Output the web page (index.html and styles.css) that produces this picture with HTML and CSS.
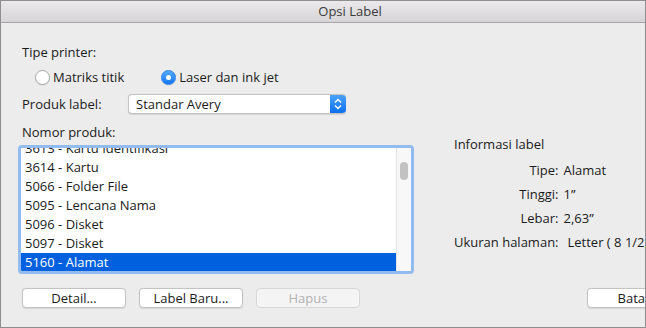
FILE: index.html
```html
<!DOCTYPE html>
<html lang="id">
<head>
<meta charset="utf-8">
<title>Opsi Label</title>
<link rel="stylesheet" href="styles.css">
</head>
<body>
<div class="window">
  <div class="titlebar"><span class="title">Opsi Label</span></div>
  <div class="content">
    <div class="label">Tipe printer:</div>
    <div class="radios">
      <label class="radio"><span class="circle"></span>Matriks titik</label>
      <label class="radio"><span class="circle checked"></span>Laser dan ink jet</label>
    </div>
    <div class="product-row">
      <span class="label product-label">Produk label:</span>
      <div class="select">
        <span class="select-text">Standar Avery</span>
        <span class="stepper">
          <svg width="16" height="20" viewBox="0 0 16 20"><path d="M5 8.5 L8 5.5 L11 8.5" fill="none" stroke="#fff" stroke-width="1.4"/><path d="M5 11.5 L8 14.5 L11 11.5" fill="none" stroke="#fff" stroke-width="1.4"/></svg>
        </span>
      </div>
    </div>
    <div class="main">
      <div class="left">
        <div class="label">Nomor produk:</div>
        <div class="listbox">
          <div class="items">
            <div class="item first">3613 - Kartu Identifikasi</div>
            <div class="item">3614 - Kartu</div>
            <div class="item">5066 - Folder File</div>
            <div class="item">5095 - Lencana Nama</div>
            <div class="item">5096 - Disket</div>
            <div class="item">5097 - Disket</div>
            <div class="item selected">5160 - Alamat</div>
          </div>
          <div class="scrollbar"><div class="thumb"></div></div>
        </div>
      </div>
      <div class="info">
        <div class="info-title">Informasi label</div>
        <div class="info-grid">
          <span class="key">Tipe:</span><span class="val">Alamat</span>
          <span class="key">Tinggi:</span><span class="val">1”</span>
          <span class="key">Lebar:</span><span class="val">2,63”</span>
          <span class="key">Ukuran halaman:</span><span class="val val-wide">Letter ( 8 1/2 x 11 inci)</span>
        </div>
      </div>
    </div>
    <div class="buttons">
      <button class="btn">Detail...</button>
      <button class="btn">Label Baru...</button>
      <button class="btn disabled">Hapus</button>
      <button class="btn cancel">Batal</button>
    </div>
  </div>
</div>
</body>
</html>
```
FILE: styles.css
```css
html, body {
  margin: 0;
  padding: 0;
  background: #ececec;
}
body {
  font-family: "Open Sans", "Noto Sans", sans-serif;
  font-size: 13px;
  color: #1b1b1b;
}
.window {
  width: 646px;
  height: 328px;
  box-sizing: border-box;
  border: 1px solid #8e8e8e;
  background: #ececec;
  overflow: hidden;
}
.titlebar {
  height: 21px;
  border-bottom: 1px solid #a6a6a6;
  background: linear-gradient(#ebe9eb, #d6d4d6);
  display: flex;
  justify-content: center;
  align-items: center;
  padding-left: 54px;
}
.title {
  color: #3a3a3a;
  line-height: 21px;
}
.content {
  padding: 21px 0 0 17px;
}
.label {
  line-height: 16px;
  margin-left: 4px;
}
.radios {
  display: flex;
  align-items: center;
  height: 18px;
  margin-top: 8px;
  padding-left: 17px;
  gap: 37px;
}
.radio {
  display: flex;
  align-items: center;
  gap: 3px;
  line-height: 18px;
}
.circle {
  width: 13px;
  height: 13px;
  border-radius: 50%;
  border: 1px solid #a9a9a9;
  background: #fff;
  box-shadow: 0 0.5px 1px rgba(0,0,0,0.12);
  display: flex;
  align-items: center;
  justify-content: center;
}
.circle.checked {
  border-color: #2a83f0;
  background: linear-gradient(#55a9fb, #1677f2);
}
.circle.checked::after {
  content: "";
  width: 5px;
  height: 5px;
  border-radius: 50%;
  background: #fff;
}
.product-row {
  display: flex;
  align-items: center;
  height: 20px;
  margin-top: 8px;
}
.product-label {
  width: 106px;
}
.select {
  width: 218px;
  height: 20px;
  box-sizing: border-box;
  display: flex;
  background: #fff;
  border: 1px solid #c3c3c3;
  border-right: none;
  border-radius: 4px;
  box-shadow: 0 0.5px 1px rgba(0,0,0,0.1);
  overflow: hidden;
}
.select-text {
  flex: 1;
  padding-left: 7px;
  line-height: 18px;
}
.stepper {
  width: 16px;
  height: 20px;
  margin-top: -1px;
  background: linear-gradient(#4ea4fb, #0b6cf0);
  display: flex;
  align-items: center;
  justify-content: center;
}
.main {
  display: flex;
  margin-top: 10px;
}
.left {
  width: 396px;
  flex-shrink: 0;
}
.listbox {
  margin-top: 5px;
  height: 129px;
  box-sizing: border-box;
  border: 3px solid #92bcf0;
  border-radius: 4px;
  background: #fff;
  display: flex;
  overflow: hidden;
}
.items {
  flex: 1;
  overflow: hidden;
}
.item {
  height: 19px;
  line-height: 19px;
  padding-left: 4px;
  white-space: nowrap;
}
.item.first {
  margin-top: -9px;
}
.item.selected {
  background: #0060de;
  color: #fff;
}
.scrollbar {
  width: 14px;
  background: #f8f8f8;
  border-left: 1px solid #e4e4e4;
  display: flex;
  justify-content: center;
}
.thumb {
  width: 8px;
  height: 18px;
  margin-top: 14px;
  border-radius: 4px;
  background: #c2c2c2;
}
.info {
  margin-left: 40px;
  padding-top: 12px;
  white-space: nowrap;
  flex-shrink: 0;
}
.info-title {
  line-height: 16px;
}
.info-grid {
  margin-top: 6px;
  display: grid;
  grid-template-columns: auto auto;
  grid-auto-rows: 24px;
  column-gap: 5px;
  align-items: center;
}
.key {
  justify-self: end;
}
.val-wide {
  padding-left: 4px;
}
.buttons {
  display: flex;
  margin-top: 14px;
  padding-left: 4px;
  gap: 13px;
}
.btn {
  flex-shrink: 0;
  width: 104px;
  height: 20px;
  box-sizing: border-box;
  padding: 0;
  font-family: inherit;
  font-size: 13px;
  color: #1b1b1b;
  background: #fff;
  border: 1px solid #c3c3c3;
  border-radius: 4px;
  box-shadow: 0 0.5px 1px rgba(0,0,0,0.1);
  line-height: 18px;
}
.btn.disabled {
  background: #f4f4f4;
  border-color: #d8d8d8;
  color: #b2b2b2;
  box-shadow: none;
}
.btn.cancel {
  width: 92px;
  margin-left: 214px;
}
```
